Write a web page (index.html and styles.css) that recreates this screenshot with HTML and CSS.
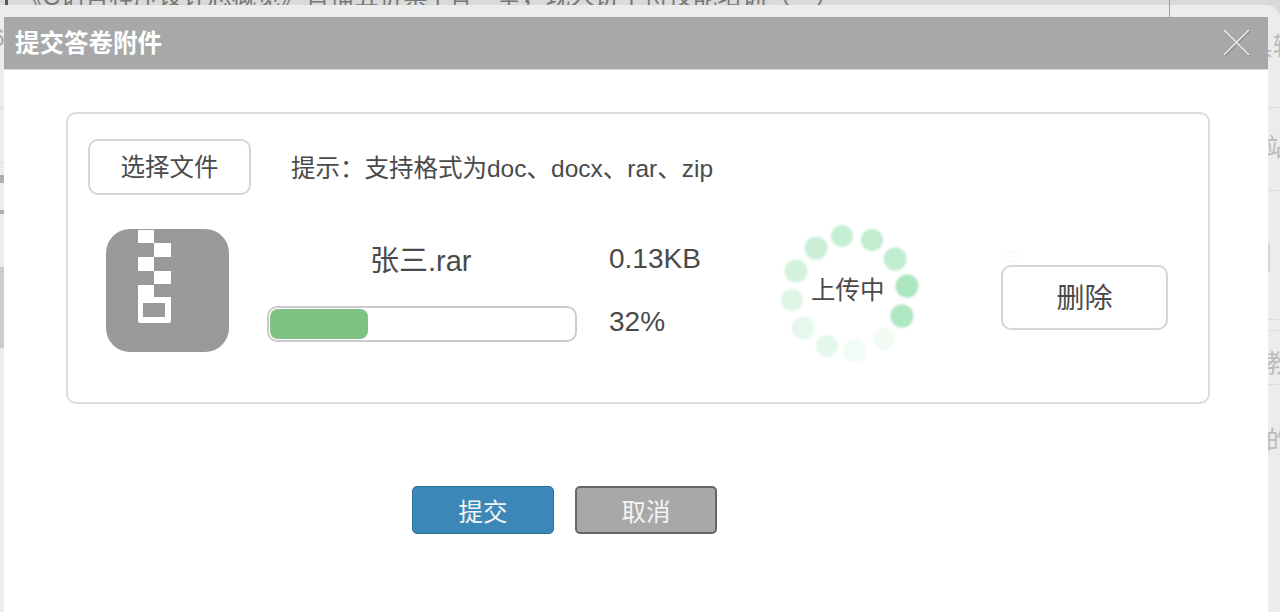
FILE: index.html
```html
<!DOCTYPE html>
<html>
<head>
	<meta charset="UTF-8" />
	<title>提交答卷附件</title>
	<link rel="stylesheet" href="styles.css">
</head>
<body>
	<!-- page behind the dialog -->
	<div class="backdrop">
		<div class="top-strip"><i class="top-icon"></i><span class="top-text">《C语言程序设计总概览》直播五折票 | 有一堂，现人讲主持技能培训（一）</span></div>
		<div class="frame">
			<div class="left-rail">
				<div class="left-cell left-a"><span>6</span></div>
				<div class="left-cell left-a2"></div>
				<div class="left-cell left-b"><i class="mark-a"></i><i class="mark-b"></i></div>
				<div class="left-block"></div>
			</div>
			<div class="right-rail">
				<div class="right-cell right-a"><span class="far">具轴</span></div>
				<div class="right-cell right-b"><span>站点</span></div>
				<div class="right-cell right-c"><i class="sliver"></i></div>
				<div class="right-cell right-d"></div>
				<div class="right-cell right-e"><span>教程</span></div>
				<div class="right-cell right-f"><span>的资</span></div>
			</div>
		</div>
		<i class="top-line"></i>
	</div>

	<!-- Dialog -->
	<div class="dialog">
		<div class="dialog-head">
			<span class="dialog-title">提交答卷附件</span>
			<svg class="close-icon" width="30" height="30" viewBox="0 0 30 30">
				<path d="M2.5 3 L27.5 28 M27.5 3 L2.5 28" stroke="#7d7d7d" stroke-width="1.4" fill="none"/>
				<path d="M2 2 L27 27 M27 2 L2 27" stroke="#eeeeee" stroke-width="1.5" fill="none"/>
			</svg>
		</div>
		<div class="dialog-body">
			<div class="panel">
				<div class="pick-row">
					<div class="btn-outline btn-pick"><span class="btn-text">选择文件</span></div>
					<div class="hint">提示：支持格式为doc、docx、rar、zip</div>
				</div>
				<div class="file-row">
					<svg class="zip-icon" width="123" height="123" viewBox="0 0 123 123">
						<rect width="123" height="123" rx="24" fill="#999999"/>
						<g fill="#ffffff">
							<rect x="32" y="1" width="16" height="13"/>
							<rect x="48" y="14" width="17" height="14"/>
							<rect x="32" y="28" width="16" height="14"/>
							<rect x="48" y="42" width="17" height="13"/>
							<path fill-rule="evenodd" d="M32 56H48V68H65V92Q65 94 63 94H34Q32 94 32 92ZM37 74V88H59V74Z"/>
						</g>
					</svg>
					<div class="file-main">
						<div class="file-name">张三.rar</div>
						<div class="progress"><div class="progress-fill" style="width: 98px"></div></div>
					</div>
					<div class="file-stats">
						<div class="stat">0.13KB</div>
						<div class="stat stat-pct">32%</div>
					</div>
					<div class="spinner">
						<svg width="140" height="137" viewBox="780 225 140 137">
							<circle cx="842" cy="236" r="11" fill="#c6eed4"/>
							<circle cx="872" cy="240" r="11" fill="#c0ecd0"/>
							<circle cx="895" cy="259" r="11.5" fill="#c0ecd0"/>
							<circle cx="907" cy="286" r="11.5" fill="#abe6bf"/>
							<circle cx="902" cy="316" r="11.5" fill="#aee7c1"/>
							<circle cx="884" cy="339" r="11" fill="#f1fbf4"/>
							<circle cx="855" cy="351" r="12" fill="#f2fbf5"/>
							<circle cx="827" cy="346" r="11" fill="#e3f7ea"/>
							<circle cx="803" cy="328" r="11.5" fill="#e6f8ec"/>
							<circle cx="792" cy="300" r="11" fill="#dcf5e5"/>
							<circle cx="796" cy="271" r="11.5" fill="#d2f2dd"/>
							<circle cx="816" cy="248" r="11.5" fill="#c9efd7"/>
						</svg>
						<span class="spinner-label">上传中</span>
					</div>
					<div class="delete-col">
						<div class="faint-pill"></div>
						<div class="btn-outline btn-delete"><span class="btn-text">删除</span></div>
					</div>
				</div>
			</div>
			<div class="actions">
				<div class="btn-action btn-submit">提交</div>
				<div class="btn-action btn-cancel">取消</div>
			</div>
		</div>
	</div>
</body>
</html>
```

FILE: styles.css
```css
html, body{
	margin: 0;
	padding: 0;
	height: 100%;
	overflow: hidden;
}

body{
	width: 1280px;
	height: 612px;
	position: relative;
	background: #d9d9d9;
	font-family: "Liberation Sans", "Noto Sans CJK SC", sans-serif;
	font-size: 24.5px;
	color: #4a4a4a;
}

/* backdrop */
.backdrop{
	display: flex;
	flex-direction: column;
	height: 612px;
}

.top-strip{
	height: 5px;
	overflow: hidden;
	flex: none;
	display: flex;
}

.top-icon{
	display: block;
	flex: none;
	width: 3px;
	height: 5px;
	margin-left: 5px;
	background: #555555;
}

.top-text{
	display: block;
	margin: -17px 0 0 10px;
	font-size: 24.5px;
	line-height: 28px;
	color: #777777;
	white-space: nowrap;
}

.frame{
	flex: 1;
	display: flex;
	justify-content: space-between;
	background: #ececec;
	border-top-right-radius: 14px;
}

.left-rail{
	width: 4px;
	padding-top: 12px;
	overflow: hidden;
}

.right-rail{
	width: 12px;
	padding-top: 12px;
	overflow: hidden;
}

.left-cell{
	overflow: hidden;
	border-bottom: 1px solid #dddddd;
	box-sizing: border-box;
	color: #aaaaaa;
}

.left-a{
	height: 91px;
	padding-top: 7px;
}

.left-a span{
	display: block;
	margin-left: -9px;
}

.left-a2{
	height: 55px;
}

.left-b{
	height: 104px;
	padding-top: 12px;
	border-bottom: 0;
}

.mark-a, .mark-b{
	display: block;
	background: #b0b0b0;
}

.mark-a{
	height: 8px;
}

.mark-b{
	height: 4px;
	margin-top: 27px;
}

.left-block{
	height: 81px;
	background: #cccccc;
}

.right-cell{
	overflow: hidden;
	border-bottom: 1px solid #dcdcdc;
	box-sizing: border-box;
	color: #bbbbbb;
	white-space: nowrap;
}

.right-cell span{
	display: block;
	margin-left: -2px;
}

.right-cell .far{
	margin-left: -20px;
}

.right-a{
	height: 91px;
	padding-top: 10px;
}

.right-b{
	height: 83px;
	padding-top: 20px;
}

.right-c{
	height: 129px;
	padding-top: 52px;
}

.sliver{
	display: block;
	width: 2px;
	height: 29px;
	background: #d8d8d8;
}

.right-d{
	height: 11px;
}

.right-e{
	height: 54px;
	padding-top: 13px;
}

.right-f{
	height: 120px;
	padding-top: 36px;
	border-bottom: 0;
}

.top-line{
	position: absolute;
	left: 1169px;
	top: 0;
	width: 1px;
	height: 17px;
	background: #a0a0a0;
}

/* dialog */
.dialog{
	position: absolute;
	left: 4px;
	top: 17px;
	width: 1264px;
	height: 595px;
	background: #ffffff;
}

.dialog-head{
	height: 52px;
	background: #a8a8a8;
	border-bottom: 1px solid #d8d8d8;
	display: flex;
	align-items: center;
	justify-content: space-between;
	padding: 0 16px 0 11px;
}

.dialog-title{
	font-weight: bold;
	color: #ffffff;
	margin-bottom: 4px;
}

.close-icon{
	display: block;
}

.dialog-body{
	padding: 42px 58px 0 62px;
}

.panel{
	height: 263px;
	border: 2px solid #dcdcdc;
	border-radius: 10px;
	padding: 25px 0 0 20px;
}

.pick-row{
	display: flex;
	align-items: center;
	height: 56px;
}

.btn-outline{
	border: 2px solid #d6d6d6;
	border-radius: 10px;
	box-sizing: border-box;
	display: flex;
	align-items: center;
	justify-content: center;
	color: #4a4a4a;
}

.btn-text{
	margin-bottom: 3px;
}

.btn-pick{
	width: 163px;
	height: 56px;
}

.hint{
	margin: 0 0 2px 40px;
	white-space: nowrap;
}

.file-row{
	display: flex;
	align-items: flex-start;
	margin-top: 30px;
}

.zip-icon{
	display: block;
	flex: none;
	margin: 4px 0 0 18px;
}

.file-main{
	width: 310px;
	margin-left: 38px;
}

.file-name{
	height: 34px;
	line-height: 34px;
	margin-top: 19px;
	padding-left: 103px;
	font-size: 29px;
	white-space: nowrap;
}

.progress{
	height: 36px;
	margin-top: 28px;
	border: 2px solid #cccccc;
	border-radius: 10px;
	box-sizing: border-box;
	padding: 1px;
}

.progress-fill{
	height: 30px;
	background: #7fc283;
	border-radius: 8px;
}

.file-stats{
	width: 171px;
	margin-left: 32px;
	padding-top: 17px;
	font-size: 28px;
}

.stat{
	height: 34px;
	line-height: 34px;
}

.stat-pct{
	margin-top: 29px;
}

.spinner{
	width: 140px;
	height: 137px;
	flex: none;
	position: relative;
}

.spinner svg{
	display: block;
	filter: blur(1px);
}

.spinner-label{
	position: absolute;
	left: 31px;
	top: 49px;
	line-height: 34px;
	white-space: nowrap;
}

.delete-col{
	margin-left: 81px;
	padding-top: 26px;
}

.faint-pill{
	width: 20px;
	height: 9px;
	border: 1px solid #f8f8f8;
	border-radius: 5px;
}

.btn-delete{
	width: 167px;
	height: 65px;
	margin-top: 3px;
	font-size: 28px;
}

.actions{
	display: flex;
	gap: 21px;
	margin: 82px 0 0 346px;
}

.btn-action{
	width: 142px;
	height: 48px;
	border-radius: 5px;
	box-sizing: border-box;
	display: flex;
	align-items: center;
	justify-content: center;
	color: #f4f4f4;
}

.btn-submit{
	background: #3a87b8;
	border: 1px solid #2f6f98;
}

.btn-cancel{
	background: #a8a8a8;
	border: 2px solid #666666;
}
```
